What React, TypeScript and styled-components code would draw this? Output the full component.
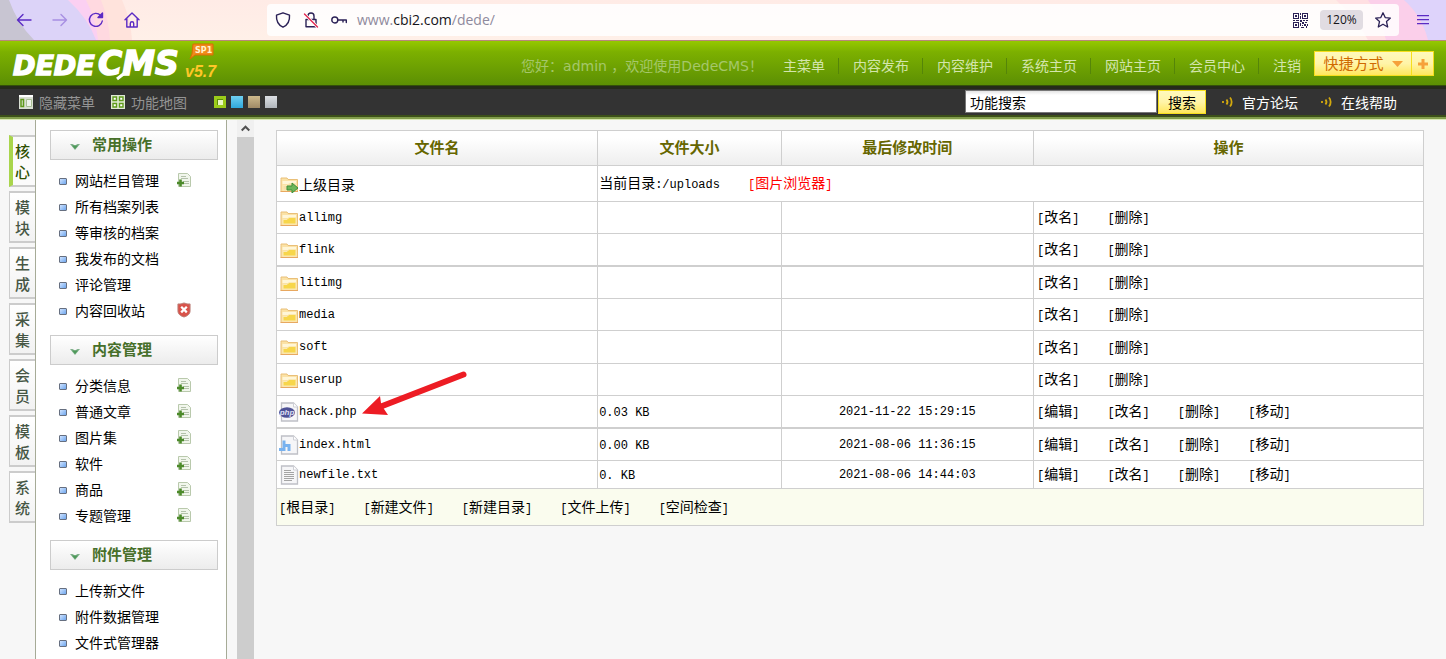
import React from "react";
import styled, { createGlobalStyle, css } from "styled-components";

const song = `"Noto Sans CJK SC", sans-serif`;
const mono = `"Liberation Mono", "Noto Sans CJK SC", monospace`;
const verdana = `"DejaVu Sans", "Noto Sans CJK SC", sans-serif`;

const Global = createGlobalStyle`
  *, *::before, *::after { box-sizing: border-box; }
  body { margin: 0; background: #f7f7f7; font: 14px/20px ${song}; color: #000; }
  button, input { font: inherit; margin: 0; }
  button { border: 0; padding: 0; background: none; cursor: pointer; }
  a { color: inherit; text-decoration: none; }
  ul { list-style: none; margin: 0; padding: 0; }
  svg { display: block; flex: none; }
`;

const Shell = styled.div`
  min-height: 100vh;
  display: flex;
  flex-direction: column;
`;

/* ---------- browser bar ---------- */

const BrowserBar = styled.div`
  position: relative;
  display: flex;
  align-items: center;
  height: 41px;
  background: linear-gradient(#ffebe6, #fff0e8);
  border-bottom: 1px solid #b9877a;
`;
const ThemeArt = styled.svg<{ $side: "left" | "right" }>`
  position: absolute;
  top: 0;
  ${(p) => p.$side}: 0;
`;
const NavButtons = styled.div`
  position: relative;
  flex: 0 0 267px;
  display: flex;
  gap: 16px;
  padding-left: 14px;
`;
const ChromeButton = styled.button<{ $faded?: boolean }>`
  width: 20px;
  height: 20px;
  display: flex;
  align-items: center;
  justify-content: center;
  color: #5b2bc4;
  opacity: ${(p) => (p.$faded ? 0.4 : 1)};
`;
const AddressBar = styled.div`
  position: relative;
  flex: 1;
  height: 32px;
  display: flex;
  align-items: center;
  gap: 12px;
  padding: 0 8px;
  border-radius: 4px;
  background: rgba(255, 255, 255, 0.85);
  color: #2b2156;
`;
const Address = styled.span`
  flex: 1;
  margin-left: -2px;
  font: 14px/20px "Open Sans", sans-serif;
  color: #8f8a9c;
  b { font-weight: 400; color: #15141a; }
`;
const ZoomLevel = styled.button`
  width: 43px;
  height: 20px;
  border-radius: 4px;
  background: #e1dce2;
  font: 12px/20px "Open Sans", sans-serif;
  color: #15141a;
`;
const MenuSlot = styled.div`
  position: relative;
  flex: 0 0 47px;
  display: flex;
  justify-content: center;
`;

/* ---------- green header ---------- */

const Header = styled.header`
  display: flex;
  align-items: center;
  justify-content: space-between;
  height: 45px;
  padding: 0 12px;
  background: linear-gradient(#95c900, #7cb000 25%, #5c8f04);
  border-bottom: 1px solid #34500a;
  font-family: ${verdana};
`;
const HeaderRight = styled.div`
  display: flex;
  align-items: center;
  padding-top: 6px;
`;
const Greeting = styled.span`
  margin-right: 6px;
  color: #a5c76a;
`;
const TopNav = styled.nav`
  display: flex;
  align-items: center;
`;
const TopLink = styled.a`
  padding: 0 13px 0 14px;
  line-height: 16px;
  color: #d3e5ac;
  & + & { border-left: 1px solid #558509; }
`;
const Shortcut = styled.div`
  display: flex;
  margin-bottom: 6px;
`;
const YellowButton = styled.button<{ $width: number; $joined?: boolean }>`
  display: flex;
  align-items: center;
  justify-content: center;
  gap: 8px;
  width: ${(p) => p.$width}px;
  height: 25px;
  padding-top: 2px;
  border: 1px solid #f6df1c;
  ${(p) => p.$joined && css`border-left: 0;`}
  background: linear-gradient(#fff9bd, #fff4a8 50%, #ffe75c);
  font-size: 15px;
  color: #cf6a00;
`;

/* ---------- dark tool bar ---------- */

const ToolBar = styled.div`
  display: flex;
  align-items: center;
  justify-content: space-between;
  height: 34px;
  padding: 0 49px 2px 19px;
  border-bottom: 1px solid #d9e9b3;
  background: linear-gradient(#252a1b 3px, #333 3px, #333 29px, #3c5019 29px, #3c5019 31px, #829d4c 31px);
  color: #949494;
`;
const Tools = styled.div`
  display: flex;
  align-items: center;
`;
const ToolLink = styled.a`
  display: flex;
  align-items: center;
  gap: 6px;
  margin-right: 16px;
`;
const Swatches = styled.div`
  display: flex;
  gap: 5px;
  margin-left: 11px;
`;
const Swatch = styled.button<{ $from: string; $to: string; $current?: boolean }>`
  width: 12px;
  height: 12px;
  background: linear-gradient(${(p) => p.$from}, ${(p) => p.$to});
  ${(p) => p.$current && css`
    border: 3px solid #9ccb1a;
    box-shadow: inset 1px 1px 0 #5c8f04;
  `}
`;
const Search = styled.form`
  display: flex;
  align-items: center;
  gap: 1px;
`;
const SearchInput = styled.input`
  width: 192px;
  height: 23px;
  padding: 0 4px;
  border: 1px solid #777;
  border-radius: 0;
  background: linear-gradient(#e4e4e4, #fff 4px);
  line-height: 20px;
  color: #000;
`;
const SearchButton = styled(YellowButton)`
  height: 24px;
  padding: 0;
  font-size: 14px;
  color: #000;
`;
const HelpLink = styled.a`
  display: flex;
  align-items: center;
  gap: 9px;
  margin-left: 16px;
  & + & { margin-left: 23px; }
  color: #fff;
`;

/* ---------- side menu ---------- */

const Body = styled.div`
  flex: 1;
  display: flex;
`;
const TabRail = styled.nav`
  flex: 0 0 35px;
  display: flex;
  flex-direction: column;
  gap: 4px;
  padding: 15px 0 0 9px;
`;
const Tab = styled.a<{ $active?: boolean }>`
  height: 52px;
  padding: 3px 5px;
  border: 1px solid #ccc;
  border-width: 2px 0 2px 1px;
  background: linear-gradient(#fff, #f2f2f2);
  font-size: 15px;
  font-weight: 500;
  line-height: 21px;
  color: #465644;
  ${(p) => p.$active && css`
    padding-left: 2px;
    border-left: 4px solid #a9d54c;
    background: #fbfbfb;
    color: #2f5100;
  `}
`;
const Panel = styled.aside`
  flex: 0 0 192px;
  padding: 10px 8px 0 14px;
  border: solid #a6ab97;
  border-width: 0 1px;
  background: #fff;
`;
const MenuSection = styled.section`
  & + & { margin-top: 12px; }
`;
const MenuHeading = styled.h2`
  display: flex;
  align-items: center;
  gap: 12px;
  height: 30px;
  margin: 0 0 7px;
  padding: 0 0 2px 19px;
  border: 1px solid #ccc;
  background: linear-gradient(#fff, #ececec);
  font-size: 15px;
  font-weight: 700;
  line-height: 20px;
  color: #47702a;
  svg { margin-top: 5px; }
`;
const MenuItem = styled.li`
  display: flex;
  align-items: center;
  height: 26px;
  padding: 0 27px 0 9px;
  &::before {
    content: "";
    width: 8px;
    height: 7px;
    margin: 2px 8px 0 0;
    border: 1px solid #666f80;
    border-radius: 1px;
    background: linear-gradient(135deg, #cfe3ff, #6ea6ee);
  }
`;
const MenuLink = styled.a`
  flex: 1;
`;
const ScrollTrack = styled.div`
  flex: 0 0 17px;
  margin-left: 10px;
  background: #cdcdcd;
`;
const ScrollUp = styled.button`
  display: flex;
  align-items: center;
  justify-content: center;
  width: 17px;
  height: 17px;
  background: #f0f0f0;
`;

/* ---------- file table ---------- */

const Content = styled.main`
  flex: 1;
  min-width: 0;
  padding: 10px 22px;
`;
const FileTable = styled.table`
  width: 100%;
  table-layout: fixed;
  border-collapse: separate;
  border-spacing: 0;
  border: solid #cfcfcf;
  border-width: 1px 0 0 1px;
  background: #fff;
`;
const Th = styled.th<{ $share: number }>`
  width: ${(p) => p.$share}%;
  height: 35px;
  padding: 0 0 2px;
  border: solid #cfcfcf;
  border-width: 0 1px 1px 0;
  background: linear-gradient(#fff 20%, #eee);
  font-size: 15px;
  font-weight: 700;
  color: #666600;
`;
const Row = styled.tr<{ $height: number; $heavy?: boolean }>`
  td {
    position: relative;
    height: ${(p) => p.$height}px;
    padding: 0 1px;
    border: solid #cfcfcf;
    border-width: 0 1px ${(p) => (p.$heavy ? 2 : 1)}px 0;
  }
`;
const FileName = styled.div`
  display: flex;
  align-items: center;
  padding-left: 1px;
`;
const Ascii = styled.span`
  font: 12px/20px ${mono};
`;
const DateText = styled(Ascii)`
  display: block;
  text-align: center;
`;
const Links = styled.div<{ $inset: number }>`
  display: flex;
  gap: 28px;
  padding-left: ${(p) => p.$inset}px;
`;
const TextLink = styled.a<{ $red?: boolean }>`
  white-space: nowrap;
  color: ${(p) => (p.$red ? "#f00" : "#000")};
`;
const Footer = styled.td`
  background: #fafcee;
`;
const Pointer = styled.svg`
  position: absolute;
  left: 84px;
  top: -26px;
  z-index: 1;
  pointer-events: none;
`;

/* ---------- drawings ---------- */

const stroke = { fill: "none", stroke: "currentColor", strokeLinecap: "round", strokeLinejoin: "round" } as const;

const BackIcon = () => (
  <svg width="16" height="16" viewBox="0 0 16 16" {...stroke} strokeWidth="1.4"><path d="M15 8H1.5M7 2.5 1.5 8 7 13.5" /></svg>
);
const ForwardIcon = () => (
  <svg width="16" height="16" viewBox="0 0 16 16" {...stroke} strokeWidth="1.4"><path d="M1 8h13.5M9 2.5 14.5 8 9 13.5" /></svg>
);
const ReloadIcon = () => (
  <svg width="16" height="16" viewBox="0 0 16 16" {...stroke} strokeWidth="1.4">
    <path d="M14.3 9A6.5 6.5 0 1 1 12.6 3.4" /><path d="M14.5 1v4.5H10z" fill="currentColor" />
  </svg>
);
const HomeIcon = () => (
  <svg width="16" height="16" viewBox="0 0 16 16" {...stroke} strokeWidth="1.4">
    <path d="M1 7.8 8 1l7 6.8M2.8 6.5V15h10.4V6.5M6.3 15v-3.6a1.7 1.7 0 0 1 3.4 0V15" />
  </svg>
);
const ShieldIcon = () => (
  <svg width="16" height="16" viewBox="0 0 16 16" {...stroke} strokeWidth="1.4">
    <path d="M8 .8 14.5 3.2c.4 5-1.6 9.6-6.5 12C3.1 12.8 1.1 8.2 1.5 3.2z" />
  </svg>
);
const LockIcon = () => (
  <svg width="16" height="16" viewBox="0 0 16 16" {...stroke} strokeWidth="1.4">
    <path d="M3 7.5h10v7.3H3zM5 7.5V4a3 3 0 0 1 6 0v3.5" /><path d="M1.5 2 14.5 15" stroke="#fff" strokeWidth="3" /><path d="M1.5 2 14.5 15" stroke="#e22850" />
  </svg>
);
const KeyIcon = () => (
  <svg width="16" height="16" viewBox="0 0 16 16" {...stroke} strokeWidth="1.4">
    <circle cx="3.8" cy="8" r="3" /><path d="M7 8h8.3v2.5M12 8v2" />
  </svg>
);
const QrIcon = () => (
  <svg width="15" height="15" viewBox="0 0 15 15" fill="currentColor" shapeRendering="crispEdges">
    <path fillRule="evenodd" d="M0 0h6v6H0zM1 1v4h4V1zM9 0h6v6H9zM10 1v4h4V1zM0 9h6v6H0zM1 10v4h4v-4z" />
    <path d="M2 2h2v2H2zM11 2h2v2h-2zM2 11h2v2H2zM7 0h1v2H7zM7 3h1v3H7zM0 7h2v1H0zM3 7h3v1H3zM7 7h2v2H7zM10 7h2v1h-2zM13 7h2v1h-2zM9 9h2v2H9zM12 9h2v1h-2zM7 10h1v3H7zM11 11h2v2h-2zM9 12h1v1H9zM14 11h1v2h-1zM8 14h3v1H8zM13 13h1v2h-1z" />
  </svg>
);
const StarIcon = () => (
  <svg width="16" height="16" viewBox="0 0 16 16" {...stroke} strokeWidth="1.3">
    <path d="m8 .8 2.2 4.8 5.2.5-3.9 3.5 1.2 5.4L8 12.2 3.3 15l1.2-5.400L.6 6.100l5.200-.5z" />
  </svg>
);
const MenuIcon = () => (
  <svg width="12" height="12" viewBox="0 0 12 12" fill="currentColor"><path d="M0 1h12v1.300H0zM0 5h12v1.300H0zM0 9h12v1.300H0z" /></svg>
);

const Logo = () => (
  <svg width="210" height="44" viewBox="0 0 210 44" role="img" aria-label="DEDECMS v5.7 SP1">
    <g fontFamily='"DejaVu Sans", sans-serif' fontWeight="700" fontStyle="italic" fill="#fff">
      <g stroke="#fff" strokeWidth="1.5">
        <text x="1" y="34" fontSize="27">DEDE</text>
        <text x="86" y="34" fontSize="33">CMS</text>
        <path d="M105 38 114 31" strokeWidth="3" />
      </g>
      <text x="173" y="36" fontSize="16" fontFamily='"Liberation Sans", sans-serif' fill="#ffc728">v5.7</text>
    </g>
    <path d="M181 3h20v11h-18l-5 4 2-5z" fill="#f08a1c" stroke="#d96e00" />
    <text x="183" y="12" fontSize="8" fontFamily='"DejaVu Sans", sans-serif' fontWeight="700" fill="#fff4d0">SP1</text>
  </svg>
);
const HideMenuIcon = () => (
  <svg width="14" height="14" viewBox="0 0 14 14">
    <path fill="#d9dfd3" d="M0 0h14v14H0z" /><path fill="#fff" d="M0 0h14v2H0z" />
    <path fill="none" stroke="#5f9a1b" strokeWidth="1.5" d="M2 4.5h2.5v7H2z" /><path fill="#eef2ea" stroke="#a8bf94" d="M7.5 4.5h5v7h-5z" />
  </svg>
);
const MapIcon = () => (
  <svg width="14" height="14" viewBox="0 0 14 14">
    <path fill="#dfe9d3" d="M0 0h14v14H0z" />
    <path fill="#fff" stroke="#5f9a1b" strokeWidth="1.4" d="M2 2h3.5v3.5H2zM8.5 2H12v3.5H8.5zM2 8.5h3.5V12H2zM8.5 8.5H12V12H8.5z" />
  </svg>
);
const SoundIcon = () => (
  <svg width="11" height="12" viewBox="0 0 11 12" fill="none" stroke="#d2a80e" strokeWidth="1.8">
    <path d="M1 5v2M4.5 3.500c1.200 1.500 1.200 3.500 0 5M8 1.500c2.200 2.500 2.200 6.500 0 9" />
  </svg>
);
const DownArrow = () => (
  <svg width="11" height="6" viewBox="0 0 11 6"><path fill="#f6a13a" d="M0 0h11L5.5 6z" /></svg>
);
const PlusIcon = () => (
  <svg width="10" height="10" viewBox="0 0 10 10"><path stroke="#f6a13a" strokeWidth="3" d="M0 5h10M5 0v10" /></svg>
);
const HeadingArrow = () => (
  <svg width="10" height="6" viewBox="0 0 10 6"><path fill="#7fb08a" d="M0 0h2.5L5 1.500 7.500 0H10L5 6z" /><path fill="#4f9a5a" d="M2 1.500h6L5 5z" /></svg>
);
const AddIcon = () => (
  <svg width="14" height="15" viewBox="0 0 14 15">
    <path fill="#f1f6ec" stroke="#b9c9ac" d="M1.5.5h9l3 3v10h-12z" />
    <path stroke="#b4c2ab" d="M4 3.5h5M4 5.5h7M6 8.5h6M7 10.5h5" />
    <path stroke="#4c8a2a" strokeWidth="2.6" d="M0 10h7M3.5 6.5v7" />
  </svg>
);
const TrashShield = () => (
  <svg width="14" height="16" viewBox="0 0 15 16">
    <path fill="#d9534a" stroke="#b98078" d="M1 1.5C5 2 6 .5 7.5.5S10 2 14 1.5V9c0 3.500-3 5.500-6.500 6.500C4 14.500 1 12.500 1 9z" />
    <path stroke="#fff" strokeWidth="2.4" d="m4.500 4.500 6 6m0-6-6 6" />
  </svg>
);
const FolderIcon = ({ up = false }: { up?: boolean }) => (
  <svg width="20" height="18" viewBox="0 0 20 18">
    <path fill="#fbe2a6" stroke="#e9bf78" d="M2 4.5V3h6l1 1.500h9.500v12H2z" />
    <path fill="#fff6d8" d="M3.5 6H17v3H3.5z" />
    <path fill={up ? "#f6dfa8" : "#f7d64a"} stroke="#fbe9b4" d="M4 15v-4.500h4l2-2H17V15z" />
    <path stroke="#e8a860" d="M1.5 16.5H19" />
    {up && <path fill="#6db65a" stroke="#3f8f38" d="M8 11h5V8l6 5-6 5v-3H8z" />}
  </svg>
);
const Page = ({ children }: { children: React.ReactNode }) => (
  <svg width="20" height="20" viewBox="0 0 20 20">
    <path fill="#f6f6f8" stroke="#bfc0c6" strokeWidth="1.3" d="M2.5 1h12l4 4v14h-16z" />
    <path fill="#fff" stroke="#cfd0d6" d="M14.5 1v4h4" />
    {children}
  </svg>
);
const PhpIcon = () => (
  <Page>
    <ellipse cx="8" cy="10.5" rx="8" ry="5.2" fill="#4f5296" />
    <text x="8" y="13" textAnchor="middle" fontSize="8" fontStyle="italic" fontWeight="700" fontFamily='"Liberation Sans", sans-serif' fill="#dfe0f4">php</text>
  </Page>
);
const HtmlIcon = () => (
  <Page>
    <path fill="none" stroke="#78b2ef" strokeWidth="3" d="M0 14.5h5V5.5M5 10.5h5v5.5" />
  </Page>
);
const TxtIcon = () => (
  <Page><path stroke="#a4a4a4" d="M5 5.5h7M5 7.5h10M5 9.5h10M5 11.5h10M5 13.5h10M5 15.5h8" /></Page>
);

/* ---------- data ---------- */

const topLinks = ["主菜单", "内容发布", "内容维护", "系统主页", "网站主页", "会员中心", "注销"];
const tabs = ["核心", "模块", "生成", "采集", "会员", "模板", "系统"];

type Item = { name: string; icon?: "add" | "trash" };
const add = (name: string): Item => ({ name, icon: "add" });
const sections: { title: string; items: Item[] }[] = [
  {
    title: "常用操作",
    items: [add("网站栏目管理"), { name: "所有档案列表" }, { name: "等审核的档案" }, { name: "我发布的文档" }, { name: "评论管理" }, { name: "内容回收站", icon: "trash" }],
  },
  { title: "内容管理", items: ["分类信息", "普通文章", "图片集", "软件", "商品", "专题管理"].map(add) },
  { title: "附件管理", items: [{ name: "上传新文件" }, { name: "附件数据管理" }, { name: "文件式管理器" }] },
];

const folders = [
  { name: "allimg", height: 32 },
  { name: "flink", height: 33, heavy: true },
  { name: "litimg", height: 32 },
  { name: "media", height: 32 },
  { name: "soft", height: 33 },
  { name: "userup", height: 32 },
];
const files = [
  { name: "hack.php", size: "0.03 KB", date: "2021-11-22 15:29:15", icon: <PhpIcon />, height: 33, heavy: true, marked: true },
  { name: "index.html", size: "0.00 KB", date: "2021-08-06 11:36:15", icon: <HtmlIcon />, height: 32 },
  { name: "newfile.txt", size: "0. KB", date: "2021-08-06 14:44:03", icon: <TxtIcon />, height: 28 },
];

const Bracketed = ({ label, red }: { label: string; red?: boolean }) => (
  <TextLink href="#" $red={red}><Ascii>[</Ascii>{label}<Ascii>]</Ascii></TextLink>
);
const Actions = ({ labels, inset }: { labels: string[]; inset: number }) => (
  <Links $inset={inset}>{labels.map((l) => <Bracketed key={l} label={l} />)}</Links>
);

export default function App() {
  return (
    <Shell>
      <Global />
      <BrowserBar>
        <ThemeArt $side="left" width="140" height="40" viewBox="0 0 140 40">
          <path fill="#ffe3dc" d="M0 0h122q9 20 10 40H0z" />
          <path fill="#ffd9e0" d="M0 0h101q8 20 9 40H0z" />
          <path fill="#fbd0f2" d="M0 0h86q10 20 12 40H0z" />
          <path fill="#dcd3f8" d="M0 0h68q20 18 28 40H0z" />
          <path fill="#c8c5d2" d="M0 0h9q8 23 25 40H0z" />
        </ThemeArt>
        <ThemeArt $side="right" width="120" height="40" viewBox="0 0 120 40">
          <path fill="#ffdfe2" d="M10 0h110v40H42Q30 18 10 0z" />
          <path fill="#fbcfea" d="M42 0h78v40H60Q55 18 42 0z" />
          <path fill="#ded3fb" d="M78 0h42v40h-18Q96 16 78 0z" />
        </ThemeArt>
        <NavButtons>
          <ChromeButton aria-label="后退"><BackIcon /></ChromeButton>
          <ChromeButton aria-label="前进" $faded><ForwardIcon /></ChromeButton>
          <ChromeButton aria-label="刷新"><ReloadIcon /></ChromeButton>
          <ChromeButton aria-label="主页"><HomeIcon /></ChromeButton>
        </NavButtons>
        <AddressBar>
          <ShieldIcon />
          <LockIcon />
          <KeyIcon />
          <Address>www.<b>cbi2.com</b>/dede/</Address>
          <QrIcon />
          <ZoomLevel>120%</ZoomLevel>
          <StarIcon />
        </AddressBar>
        <MenuSlot>
          <ChromeButton aria-label="菜单"><MenuIcon /></ChromeButton>
        </MenuSlot>
      </BrowserBar>

      <Header>
        <Logo />
        <HeaderRight>
          <Greeting>您好：admin ，欢迎使用DedeCMS！</Greeting>
          <TopNav>
            {topLinks.map((l) => <TopLink key={l} href="#">{l}</TopLink>)}
          </TopNav>
          <Shortcut>
            <YellowButton $width={98}>快捷方式<DownArrow /></YellowButton>
            <YellowButton $width={22} $joined aria-label="添加"><PlusIcon /></YellowButton>
          </Shortcut>
        </HeaderRight>
      </Header>

      <ToolBar>
        <Tools>
          <ToolLink href="#"><HideMenuIcon />隐藏菜单</ToolLink>
          <ToolLink href="#"><MapIcon />功能地图</ToolLink>
          <Swatches>
            <Swatch aria-label="绿色" $from="#eaf6c0" $to="#eaf6c0" $current />
            <Swatch aria-label="蓝色" $from="#6fd0f2" $to="#2fa8dc" />
            <Swatch aria-label="棕色" $from="#cdb98c" $to="#a08a66" />
            <Swatch aria-label="灰色" $from="#dcdfe4" $to="#b0b5bb" />
          </Swatches>
        </Tools>
        <Tools>
          <Search onSubmit={(e) => e.preventDefault()}>
            <SearchInput aria-label="功能搜索" defaultValue="功能搜索" />
            <SearchButton $width={48} type="submit">搜索</SearchButton>
          </Search>
          <HelpLink href="#"><SoundIcon />官方论坛</HelpLink>
          <HelpLink href="#"><SoundIcon />在线帮助</HelpLink>
        </Tools>
      </ToolBar>

      <Body>
        <TabRail>
          {tabs.map((t, i) => <Tab key={t} href="#" $active={i === 0}>{t}</Tab>)}
        </TabRail>
        <Panel>
          {sections.map((s) => (
            <MenuSection key={s.title}>
              <MenuHeading><HeadingArrow />{s.title}</MenuHeading>
              <ul>
                {s.items.map((item) => (
                  <MenuItem key={item.name}>
                    <MenuLink href="#">{item.name}</MenuLink>
                    {item.icon === "add" && <AddIcon />}
                    {item.icon === "trash" && <TrashShield />}
                  </MenuItem>
                ))}
              </ul>
            </MenuSection>
          ))}
        </Panel>
        <ScrollTrack>
          <ScrollUp aria-label="向上滚动">
            <svg width="9" height="7" viewBox="0 0 9 7" fill="none" stroke="#505050" strokeWidth="2"><path d="M.7 5.5 4.5 1.700l3.800 3.800" /></svg>
          </ScrollUp>
        </ScrollTrack>
        <Content>
          <FileTable>
            <thead>
              <tr>
                <Th $share={28}>文件名</Th>
                <Th $share={16}>文件大小</Th>
                <Th $share={22}>最后修改时间</Th>
                <Th $share={34}>操作</Th>
              </tr>
            </thead>
            <tbody>
              <Row $height={36}>
                <td><FileName><FolderIcon up />上级目录</FileName></td>
                <td colSpan={3}>
                  <Links $inset={0}>
                    <span>当前目录<Ascii>:/uploads</Ascii></span>
                    <Bracketed label="图片浏览器" red />
                  </Links>
                </td>
              </Row>
              {folders.map((f) => (
                <Row key={f.name} $height={f.height} $heavy={f.heavy}>
                  <td><FileName><FolderIcon /><Ascii>{f.name}</Ascii></FileName></td>
                  <td />
                  <td />
                  <td><Actions inset={2} labels={["改名", "删除"]} /></td>
                </Row>
              ))}
              {files.map((f) => (
                <Row key={f.name} $height={f.height} $heavy={f.heavy}>
                  <td>
                    <FileName>{f.icon}<Ascii>{f.name}</Ascii></FileName>
                    {f.marked && (
                      <Pointer width="108" height="48" viewBox="0 0 108 48">
                        <path d="M102.5 4.5 20 36.5" stroke="#ed1c24" strokeWidth="6" strokeLinecap="round" />
                        <path d="M1 43.5 19 26l1 7 3 6 4 6z" fill="#ed1c24" />
                      </Pointer>
                    )}
                  </td>
                  <td><Ascii>{f.size}</Ascii></td>
                  <td><DateText>{f.date}</DateText></td>
                  <td><Actions inset={2} labels={["编辑", "改名", "删除", "移动"]} /></td>
                </Row>
              ))}
              <Row $height={37}>
                <Footer colSpan={4}>
                  <Actions inset={1} labels={["根目录", "新建文件", "新建目录", "文件上传", "空间检查"]} />
                </Footer>
              </Row>
            </tbody>
          </FileTable>
        </Content>
      </Body>
    </Shell>
  );
}
